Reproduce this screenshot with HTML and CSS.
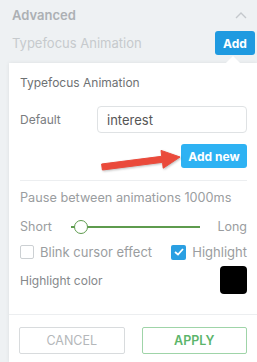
FILE: index.html
```html
<!DOCTYPE html>
<html lang="en">
<head>
    <meta charset="UTF-8">
    <meta name="viewport" content="width=device-width, initial-scale=1.0">
    <title>Typefocus Animation</title>
    <link rel="stylesheet" href="styles.css">
</head>
<body>
    <div class="panel">
        <div class="section-head">
            <span class="section-title">Advanced</span>
            <svg class="chevron" width="12" height="8" viewBox="0 0 12 8"><path d="M1 7 L6 2 L11 7" fill="none" stroke="#c4c8cc" stroke-width="1.4"/></svg>
        </div>
        <div class="field-row">
            <span class="field-name">Typefocus Animation</span>
            <button class="btn-add">Add</button>
        </div>

        <div class="popup">
            <span class="caret"></span>
            <div class="popup-title">Typefocus Animation</div>
            <div class="default-row">
                <label class="label">Default</label>
                <input class="text-input" type="text" value="interest">
            </div>
            <div class="row-end">
                <button class="btn-new">Add new</button>
            </div>
            <div class="divider"></div>
            <div class="pause">Pause between animations 1000ms</div>
            <div class="slider-row">
                <span>Short</span>
                <div class="slider"><span class="thumb"></span></div>
                <span class="long">Long</span>
            </div>
            <div class="check-row">
                <label class="check"><span class="box"></span>Blink cursor effect</label>
                <label class="check"><span class="box checked"><svg width="10" height="8" viewBox="0 0 10 8"><path d="M1 4 L4 6.5 L9 1" fill="none" stroke="#fff" stroke-width="1.8"/></svg></span>Highlight</label>
            </div>
            <div class="color-row">
                <span>Highlight color</span>
                <span class="swatch"></span>
            </div>
            <div class="footer">
                <button class="btn-cancel">CANCEL</button>
                <button class="btn-apply">APPLY</button>
            </div>
        </div>

        <svg class="arrow" width="90" height="35" viewBox="0 0 90 35">
            <polygon points="6.6,19 66.7,11.3 66,5.4 85,12 68.2,23.2 67.5,17.3 7.4,25" fill="#ea4a3b" stroke="#ea4a3b" stroke-width="1" stroke-linejoin="round"/>
        </svg>
    </div>
</body>
</html>
```

FILE: styles.css
```css
body {
    margin: 0;
    background-color: #eef1f3;
    font-family: Inter, "Noto Sans", sans-serif;
    font-size: 13px;
    overflow: hidden;
}
.panel {
    position: relative;
    height: 362px;
    overflow: hidden;
}
.section-head {
    display: flex;
    justify-content: space-between;
    align-items: center;
    height: 16px;
    padding: 7px 10px 0 12px;
}
.section-title {
    font-weight: 600;
    color: #acb0b4;
}
.field-row {
    display: flex;
    justify-content: space-between;
    align-items: center;
    padding: 8px 2px 0 12px;
}
.field-name {
    color: #c6cacd;
}
.btn-add {
    width: 40px;
    height: 24px;
    border: none;
    border-radius: 3px;
    background-color: #1f9ae0;
    color: white;
    font-family: inherit;
    font-size: 12px;
    font-weight: 700;
    padding: 0;
}
.popup {
    position: relative;
    margin: 8px 0 0 9px;
    padding: 12px 10px 8px 11px;
    background-color: white;
    box-shadow: 0 0 4px rgba(0,0,0,0.08);
}
.caret {
    position: absolute;
    top: -5px;
    left: 219px;
    width: 10px;
    height: 10px;
    background-color: white;
    transform: rotate(45deg);
}
.popup-title {
    position: relative;
    line-height: 16px;
    font-size: 12px;
    color: #6e7173;
}
.default-row {
    display: flex;
    align-items: center;
    margin-top: 15px;
}
.label {
    width: 77px;
    color: #7a7d80;
    font-size: 12px;
}
.text-input {
    box-sizing: border-box;
    width: 150px;
    height: 27px;
    border: 1px solid #dfe2e4;
    border-radius: 4px;
    padding: 0 9px;
    font-family: inherit;
    font-size: 13px;
    color: #555;
}
.row-end {
    display: flex;
    justify-content: flex-end;
    margin-top: 11px;
}
.btn-new {
    width: 66px;
    height: 24px;
    border: none;
    border-radius: 3px;
    background-color: #2eb2f3;
    color: white;
    font-family: inherit;
    font-size: 12px;
    font-weight: 700;
    padding: 0;
}
.divider {
    height: 1px;
    background-color: #eceef0;
    margin-top: 12px;
}
.pause {
    margin-top: 9px;
    line-height: 16px;
    color: #9a9da0;
    font-size: 12.7px;
}
.slider-row {
    display: flex;
    align-items: center;
    margin-top: 13px;
    line-height: 16px;
    color: #9a9da0;
    font-size: 12.5px;
}
.slider {
    position: relative;
    width: 129px;
    height: 1.5px;
    margin-left: 19px;
    background-color: #5e9b4e;
}
.thumb {
    position: absolute;
    left: 3px;
    top: -6px;
    box-sizing: border-box;
    width: 14px;
    height: 14px;
    border: 1.5px solid #5e9b4e;
    border-radius: 50%;
    background-color: white;
}
.long {
    margin-left: auto;
}
.check-row {
    display: flex;
    justify-content: space-between;
    margin-top: 9px;
    line-height: 16px;
    color: #9a9da0;
}
.check {
    display: flex;
    align-items: center;
    gap: 6px;
}
.box {
    box-sizing: border-box;
    width: 14px;
    height: 14px;
    border: 1px solid #ccd0d3;
    border-radius: 2px;
    display: flex;
    align-items: center;
    justify-content: center;
}
.box.checked {
    width: 15px;
    height: 15px;
    border: none;
    background-color: #2a9fe2;
}
.color-row {
    display: flex;
    justify-content: space-between;
    align-items: center;
    margin-top: 6px;
    color: #85888b;
    font-size: 12px;
}
.swatch {
    width: 27px;
    height: 28px;
    border-radius: 4px;
    background-color: black;
}
.footer {
    display: flex;
    gap: 17px;
    margin: 20px -10px 0 -11px;
    padding: 12px 10px 0 10px;
    border-top: 1px solid #eceef0;
}
.footer button {
    flex: 1;
    height: 27px;
    background-color: white;
    border-radius: 2px;
    font-family: inherit;
    font-size: 12.5px;
    padding: 0;
}
.btn-cancel {
    border: 1px solid #d8dbdd;
    color: #b4b7ba;
}
.btn-apply {
    border: 1px solid #9fd4a8;
    color: #5cb56a;
    font-weight: 600;
}
.arrow {
    position: absolute;
    left: 95px;
    top: 145px;
    filter: drop-shadow(1px 1px 1px rgba(0,0,0,0.25));
}
```
